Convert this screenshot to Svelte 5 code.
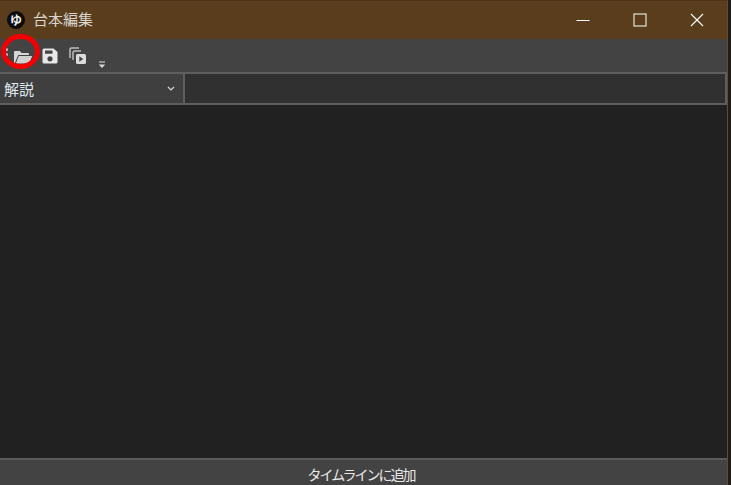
<script lang="ts">
  let speaker = $state('解説')
  let text = $state('')
</script>

<div class="window">
  <header class="titlebar">
    <span class="logo">ゆ</span>
    <span class="title">台本編集</span>
    <div class="controls">
      <button class="ctl" aria-label="minimize">
        <svg width="14" height="14" viewBox="0 0 14 14"><path d="M0.500 7.500h13" stroke="#fff" fill="none" /></svg>
      </button>
      <button class="ctl" aria-label="maximize">
        <svg width="14" height="14" viewBox="0 0 14 14"><rect x="1" y="1" width="12" height="12" stroke="#fff" fill="none" /></svg>
      </button>
      <button class="ctl" aria-label="close">
        <svg width="14" height="14" viewBox="0 0 14 14"><path d="M1 1l12 12M13 1L1 13" stroke="#fff" stroke-width="1.100" fill="none" /></svg>
      </button>
    </div>
  </header>

  <div class="toolbar">
    <span class="grip"><i></i><i></i><i></i></span>
    <button class="tool open" aria-label="open">
      <svg width="20" height="16" viewBox="0 0 20 16">
        <path d="M1 14V3.200C1 2.500 1.500 2 2.200 2h4.600l1.800 2h6.200c.7 0 1.200.5 1.200 1.200V6H5.200L1.900 14z" fill="#d6d6d6" />
        <path d="M5.800 7h13.400l-3 7.600H2.800z" fill="#d0d0d0" />
      </svg>
    </button>
    <button class="tool save" aria-label="save">
      <svg width="16" height="16" viewBox="0 0 16 16">
        <path fill-rule="evenodd" d="M2 .5h9.500L15.500 4v10a1.500 1.500 0 0 1-1.500 1.500H2A1.500 1.500 0 0 1 .5 14V2A1.500 1.500 0 0 1 2 .5zM3 2.500v3.200h7.500V2.500zM8 8.200a2.600 2.600 0 1 0 0 5.200 2.600 2.600 0 0 0 0-5.200z" fill="#e8e8e8" />
      </svg>
    </button>
    <button class="tool copy" aria-label="run all">
      <svg width="18" height="18" viewBox="0 0 18 18">
        <path d="M1 11V2.500A1.500 1.500 0 0 1 2.500 1H10" stroke="#bdbdbd" stroke-width="1.500" fill="none" />
        <path d="M4 13V5.500A1.500 1.500 0 0 1 5.500 4H12" stroke="#bdbdbd" stroke-width="1.500" fill="none" />
        <rect x="7" y="7" width="10" height="10" rx="1.500" fill="#dcdcdc" />
        <path d="M10.300 9.300l4 2.700-4 2.700z" fill="#434343" />
      </svg>
    </button>
    <span class="overflow">
      <svg width="8" height="8" viewBox="0 0 8 8">
        <path d="M1 1h6" stroke="#c8c8c8" stroke-width="1.200" fill="none" />
        <path d="M.8 3.500h6.400L4 7z" fill="#dcdcdc" />
      </svg>
    </span>
  </div>

  <div class="inputs">
    <label class="combo">
      <span class="combo-value">{speaker}</span>
      <svg width="8" height="6" viewBox="0 0 8 6"><path d="M1 1l3 3 3-3" stroke="#d8d8d8" stroke-width="1.200" fill="none" /></svg>
    </label>
    <input class="line" bind:value={text} aria-label="text" />
  </div>

  <main class="body"></main>

  <button class="add">タイムラインに追加</button>
</div>

<style>
  :global(body) {
    margin: 0;
    background: #1d1d1d;
    overflow: hidden;
  }

  .window {
    width: 727px;
    height: 485px;
    display: flex;
    flex-direction: column;
    background: #212121;
    border-right: 1px solid #6b4a22;
    font-family: "Noto Sans CJK JP", "Noto Sans", sans-serif;
    color: #e6e6e6;
  }

  button {
    font-family: inherit;
    padding: 0;
    border: none;
    background: none;
    color: inherit;
  }

  .titlebar {
    height: 38px;
    flex-shrink: 0;
    display: flex;
    align-items: center;
    background: #5a3d1c;
    border-top: 1px solid #4c3418;
    padding-left: 7px;
  }

  .logo {
    width: 18px;
    height: 18px;
    border-radius: 50%;
    background: #0c0c0c;
    color: #f2f2f2;
    font-size: 12px;
    font-weight: 700;
    line-height: 18px;
    text-align: center;
  }

  .title {
    margin-left: 8px;
    margin-top: -3px;
    font-size: 15px;
    color: #d9d5cf;
  }

  .controls {
    margin-left: auto;
    padding-right: 2px;
    display: flex;
  }

  .ctl {
    width: 57px;
    height: 38px;
    display: flex;
    align-items: center;
    justify-content: center;
  }

  .toolbar {
    height: 33px;
    flex-shrink: 0;
    display: flex;
    align-items: center;
    background: #434343;
    padding-left: 5px;
    position: relative;
  }

  .grip {
    display: flex;
    flex-direction: column;
    gap: 2px;
    margin-top: -2px;
  }

  .grip i {
    width: 3px;
    height: 3px;
    background: #d5d5d5;
    border-radius: 50%;
  }

  .tool {
    display: flex;
    align-items: center;
  }

  .open {
    margin-left: 5px;
    margin-top: 2px;
  }

  .save {
    margin-left: 9px;
    margin-top: 1px;
  }

  .copy {
    margin-left: 11px;
    margin-top: 1px;
  }

  .overflow {
    margin-left: 11px;
    margin-top: 18px;
    display: flex;
  }

  /* hand-drawn annotation ring over the open button */
  .toolbar::after {
    content: "";
    position: absolute;
    left: 1px;
    top: -5px;
    width: 39px;
    height: 35px;
    box-sizing: border-box;
    border: 5px solid #f00000;
    border-radius: 50%;
  }

  .inputs {
    height: 33px;
    flex-shrink: 0;
    display: flex;
    background: #434343;
  }

  .combo {
    width: 185px;
    box-sizing: border-box;
    display: flex;
    align-items: center;
    justify-content: space-between;
    padding: 0 8px 0 4px;
    background: #3f3f3f;
    border-top: 2px solid #5e5e5e;
    border-bottom: 2px solid #5e5e5e;
    border-right: 2px solid #5e5e5e;
  }

  .combo-value {
    font-size: 15px;
    color: #dfe6ee;
  }

  .line {
    flex: 1;
    min-width: 0;
    box-sizing: border-box;
    background: #303030;
    border: 2px solid #5e5e5e;
    border-left: none;
    outline: none;
    margin: 0;
    padding: 0;
    color: inherit;
  }

  .body {
    flex: 1;
    background: #212121;
  }

  .add {
    height: 27px;
    flex-shrink: 0;
    box-sizing: border-box;
    background: #434343;
    border-top: 2px solid #5a5a5a;
    padding-right: 5px;
    font-size: 14px;
    letter-spacing: -2px;
    line-height: 28px;
    overflow: hidden;
    color: #e8e8e8;
    text-align: center;
  }
</style>
